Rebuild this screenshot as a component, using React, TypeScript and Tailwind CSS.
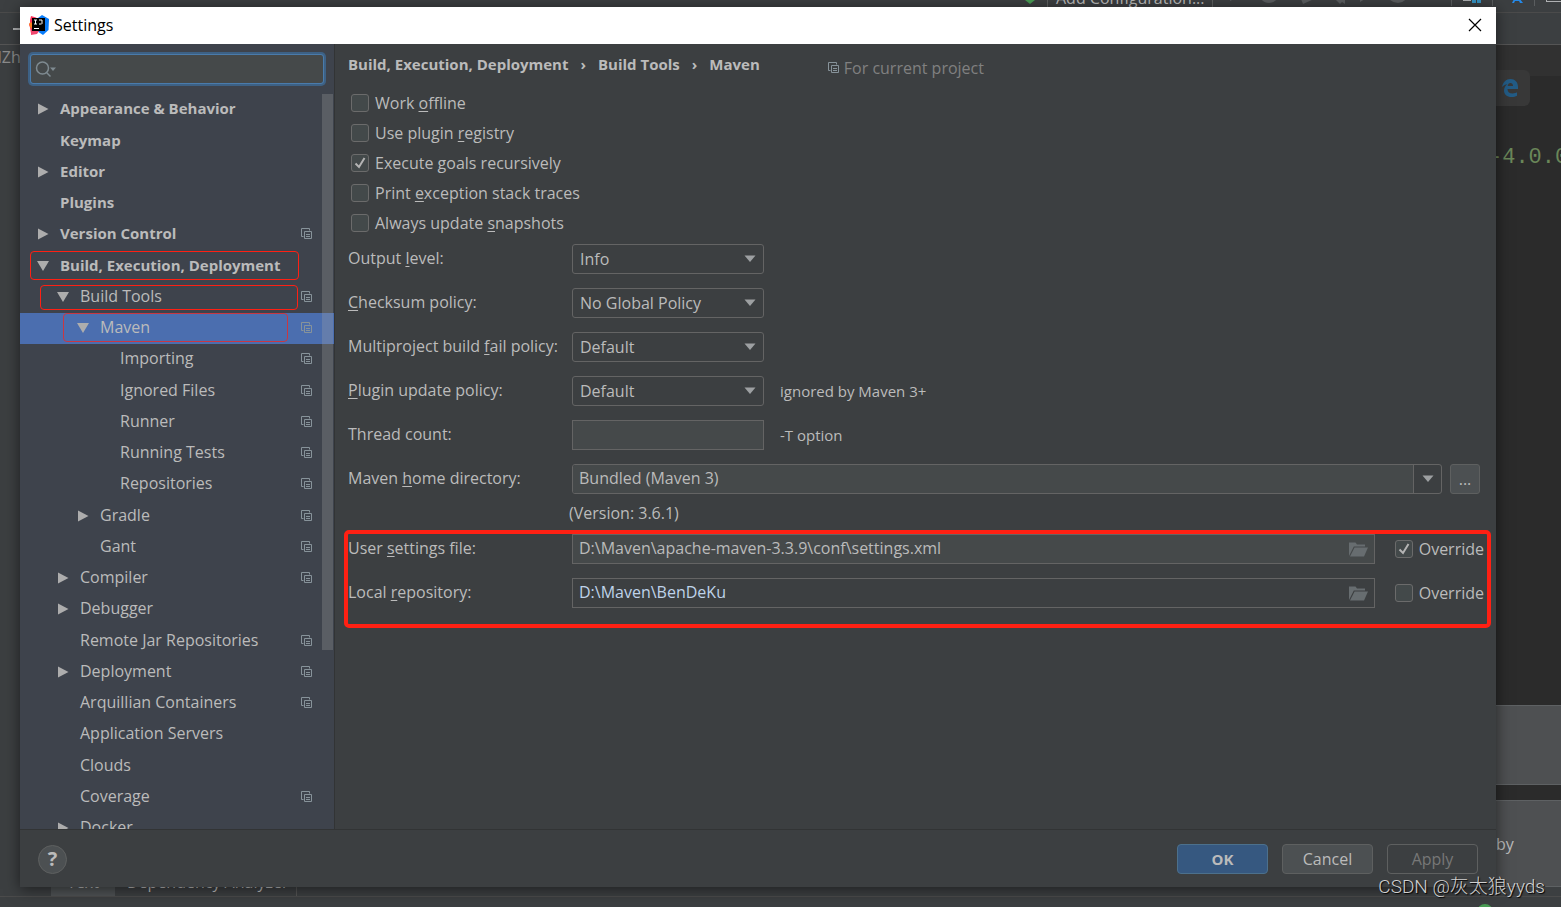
import { useState } from "react";
import type { ReactNode } from "react";

type TreeNode = {
  label: string;
  level: number;
  arrow?: "right" | "down";
  bold?: boolean;
  project?: boolean;
  selected?: boolean;
  mark?: string;
};

const TREE: TreeNode[] = [
  { label: "Appearance & Behavior", level: 0, arrow: "right", bold: true },
  { label: "Keymap", level: 0, bold: true },
  { label: "Editor", level: 0, arrow: "right", bold: true },
  { label: "Plugins", level: 0, bold: true },
  { label: "Version Control", level: 0, arrow: "right", bold: true, project: true },
  { label: "Build, Execution, Deployment", level: 0, arrow: "down", bold: true, mark: "left-[10px] right-[35px] top-0 h-[29px] border-[#ff2013]" },
  { label: "Build Tools", level: 1, arrow: "down", project: true, mark: "left-5 right-9 top-[3px] h-[25px] border-[#ff2013]" },
  { label: "Maven", level: 2, arrow: "down", project: true, selected: true, mark: "left-[43px] right-[46px] top-0 h-[29px] border-[#ff2013]/70" },
  { label: "Importing", level: 3, project: true },
  { label: "Ignored Files", level: 3, project: true },
  { label: "Runner", level: 3, project: true },
  { label: "Running Tests", level: 3, project: true },
  { label: "Repositories", level: 3, project: true },
  { label: "Gradle", level: 2, arrow: "right", project: true },
  { label: "Gant", level: 2, project: true },
  { label: "Compiler", level: 1, arrow: "right", project: true },
  { label: "Debugger", level: 1, arrow: "right" },
  { label: "Remote Jar Repositories", level: 1, project: true },
  { label: "Deployment", level: 1, arrow: "right", project: true },
  { label: "Arquillian Containers", level: 1, project: true },
  { label: "Application Servers", level: 1 },
  { label: "Clouds", level: 1 },
  { label: "Coverage", level: 1, project: true },
  { label: "Docker", level: 1, arrow: "right" },
];

const INDENT = ["pl-4", "pl-9", "pl-14", "pl-[76px]"];

const ProjectIcon = () => (
  <svg width="12" height="12" viewBox="0 0 12 12" fill="none" stroke="#87939a" className="shrink-0">
    <path d="M2.5 8.5h-2v-8h8v2" />
    <path d="M3.5 3.5h7v7h-7z" />
    <path d="M5 6.5h4M5 8.5h4" />
  </svg>
);

const TreeArrow = ({ dir }: { dir?: "right" | "down" }) => (
  <svg width="14" height="12" viewBox="0 0 14 12" fill="#adadad" className="shrink-0">
    {dir === "right" && <path d="M2 0.5v11l10.5-5.5z" />}
    {dir === "down" && <path d="M1 1h12l-6 10z" />}
  </svg>
);

const DropArrow = () => (
  <svg width="12" height="8" viewBox="0 0 12 8" fill="#9da0a2" className="pointer-events-none">
    <path d="M0.5 0.5h11l-5.5 6.5z" />
  </svg>
);

const FolderIcon = () => (
  <svg width="19" height="15" viewBox="0 0 19 15" fill="#676d70">
    <path d="M0 14V0.5h6.500l1.500 2h8V4.500H4.800z" />
    <path d="M5.600 5.500H19L15 14.500H1z" />
  </svg>
);

const Logo = () => (
  <svg width="20" height="20" viewBox="0 0 20 20">
    <path d="M1 5l1-4 5 1.500 4 4-6 9-3 3-1-6-1-3 1-2z" fill="#fc3158" />
    <path d="M0 9l2-2 2 3-2 4z" fill="#fc801d" />
    <path d="M9 3l4-3 7 4-.5 11-5.500 5-6-4z" fill="#087cfa" />
    <path d="M2 15l8 1-2 3-6 1z" fill="#f0466e" />
    <path d="M3 3h13v13H3z" fill="#000" />
    <path d="M5 5h3M6.500 5v4M5 9h3M10 5h3v3.500l-.5.5H10M5 13.500h5" stroke="#fff" fill="none" />
  </svg>
);

// An underscore in the text marks the mnemonic letter that follows it.
const Mnemonic = ({ text }: { text: string }) => {
  const at = text.indexOf("_");
  if (at < 0) return <>{text}</>;
  return (
    <>
      {text.slice(0, at)}
      <u className="underline-offset-2">{text[at + 1]}</u>
      {text.slice(at + 2)}
    </>
  );
};

const Check = ({ text, initial = false }: { text: string; initial?: boolean }) => {
  const [on, setOn] = useState(initial);
  return (
    <label className="flex h-[30px] items-center gap-[6px] whitespace-nowrap">
      <span className="relative h-[18px] w-[18px] shrink-0">
        <input
          type="checkbox"
          checked={on}
          onChange={() => setOn(!on)}
          className="block h-[18px] w-[18px] appearance-none rounded-[3px] border border-[#6b6b6b] bg-[#43494a]"
        />
        {on && (
          <svg width="18" height="18" viewBox="0 0 18 18" className="pointer-events-none absolute inset-0" fill="none" stroke="#b4b4b4" strokeWidth="2">
            <path d="M4.500 9.500l3.500 3.500 5.500-9" />
          </svg>
        )}
      </span>
      <span>
        <Mnemonic text={text} />
      </span>
    </label>
  );
};

const Row = ({ id, label, children }: { id: string; label: string; children: ReactNode }) => (
  <div className="flex h-[30px] items-center">
    <label htmlFor={id} className="w-[224px] shrink-0 whitespace-nowrap pb-[2px]">
      <Mnemonic text={label} />
    </label>
    {children}
  </div>
);

const Select = ({ id, value }: { id: string; value: string }) => (
  <div className="relative h-[30px] w-48">
    <select id={id} className="h-full w-full appearance-none rounded-[3px] border border-[#646464] bg-[#3c3f41] px-[7px] outline-none">
      <option>{value}</option>
    </select>
    <div className="pointer-events-none absolute right-2 top-[11px]">
      <DropArrow />
    </div>
  </div>
);

const PathField = ({ id, value, muted }: { id: string; value: string; muted?: boolean }) => (
  <div
    className={
      "flex h-[30px] min-w-0 flex-1 items-center border border-[#646464] pr-[6px] " +
      (muted ? "bg-[#45494a]" : "bg-[#3c3f41] text-[#bfd3ea]")
    }
  >
    <input id={id} defaultValue={value} className="min-w-0 flex-1 bg-transparent px-[6px] pb-[2px] outline-none" />
    <button aria-label="Browse">
      <FolderIcon />
    </button>
  </div>
);

const Sidebar = () => (
  <aside className="flex w-[315px] shrink-0 flex-col border-r border-[#323435] bg-[#3e434c]">
    <div className="px-[11px] pb-[11px] pt-[11px]">
      <div className="flex h-[28px] items-center gap-px rounded-[2px] bg-[#45494a] pl-1 ring-3 ring-[#3d6185] outline outline-[#4a7bab]">
        <svg width="22" height="17" viewBox="0 0 22 17" fill="none" stroke="#7f8b91" strokeWidth="1.500">
          <circle cx="7.500" cy="7" r="6" />
          <path d="M11.500 11.500l4 4" />
          <path d="M15 6.500h6l-3 3.500z" fill="#7f8b91" stroke="none" />
        </svg>
        <input aria-label="Search settings" className="min-w-0 flex-1 bg-transparent outline-none" />
      </div>
    </div>
    <div className="relative h-0 grow overflow-hidden">
      <ul>
        {TREE.map((node) => (
          <li
            key={node.label}
            className={
              "relative flex h-[31px] items-center pb-[2px] pr-[21px] nth-[4n+1]:h-8 " +
              INDENT[node.level] +
              (node.selected ? " bg-[#4b6eaf]" : "") +
              (node.bold ? " text-[15px] font-bold" : "")
            }
          >
            <TreeArrow dir={node.arrow} />
            <span className="ml-[10px] flex-1 whitespace-nowrap pb-[2px] leading-5">{node.label}</span>
            {node.project && <ProjectIcon />}
            {node.mark && <span className={"pointer-events-none absolute rounded border " + node.mark} />}
          </li>
        ))}
      </ul>
      <div className="absolute right-[1px] top-0 h-[556px] w-[11px] bg-[#a6a6a6]/28" />
    </div>
  </aside>
);

const MavenPage = () => (
  <main className="min-w-0 flex-1 pl-[13px] pr-3">
    <div className="flex h-[44px] items-center">
      <h1 className="flex gap-3 whitespace-nowrap pb-1 text-[15px] leading-5 font-bold">
        <span>Build, Execution, Deployment</span>
        <span>›</span>
        <span>Build Tools</span>
        <span>›</span>
        <span>Maven</span>
      </h1>
      <p className="ml-[68px] flex items-center gap-1 whitespace-nowrap pt-1 text-[#808080]">
        <ProjectIcon />
        For current project
      </p>
    </div>
    <div className="pl-[3px]">
      <Check text="Work _offline" />
      <Check text="Use plugin _registry" />
      <Check text="Execute _goals recursively" initial />
      <Check text="Print _exception stack traces" />
      <Check text="Always update _snapshots" />
    </div>
    <div className="mt-[6px] flex flex-col gap-[14px]">
      <Row id="output" label="Output _level:">
        <Select id="output" value="Info" />
      </Row>
      <Row id="checksum" label="_Checksum policy:">
        <Select id="checksum" value="No Global Policy" />
      </Row>
      <Row id="fail" label="Multiproject build _fail policy:">
        <Select id="fail" value="Default" />
      </Row>
      <Row id="update" label="_Plugin update policy:">
        <Select id="update" value="Default" />
        <span className="ml-4 text-[15px]">ignored by Maven 3+</span>
      </Row>
      <Row id="threads" label="Thread count:">
        <input id="threads" className="h-[30px] w-48 border border-[#646464] bg-[#45494a] px-[6px] outline-none" />
        <span className="ml-4 text-[15px]">-T option</span>
      </Row>
      <Row id="home" label="Maven _home directory:">
        <div className="flex h-[30px] min-w-0 flex-1 overflow-hidden rounded-[3px] border border-[#646464]">
          <input id="home" defaultValue="Bundled (Maven 3)" className="min-w-0 flex-1 bg-[#45494a] px-[6px] pb-[2px] outline-none" />
          <button aria-label="Show Maven homes" className="flex w-7 items-center justify-center border-l border-[#646464]">
            <DropArrow />
          </button>
        </div>
        <button className="ml-2 mr-1 h-[30px] w-[30px] rounded-[3px] border border-[#5e6060] bg-[#4c5052]">...</button>
      </Row>
    </div>
    <p className="ml-[221px] flex h-10 items-center pb-[2px]">(Version: 3.6.1)</p>
    <div className="relative flex flex-col gap-[14px]">
      <Row id="settings" label="User _settings file:">
        <PathField id="settings" value="D:\Maven\apache-maven-3.3.9\conf\settings.xml" muted />
        <div className="ml-5">
          <Check text="Override" initial />
        </div>
      </Row>
      <Row id="repo" label="Local _repository:">
        <PathField id="repo" value="D:\Maven\BenDeKu" />
        <div className="ml-5">
          <Check text="Override" />
        </div>
      </Row>
      <div className="pointer-events-none absolute -bottom-5 -left-1 -right-[7px] -top-1 rounded-[5px] border-4 border-[#ff2013]" />
    </div>
  </main>
);

const Dialog = () => (
  <section aria-label="Settings" className="flex w-full flex-col bg-[#3c3f41] shadow-[0_2px_14px_rgba(0,0,0,0.55)]">
    <header className="flex h-[37px] items-center gap-[5px] bg-white pb-[2px] pl-[9px] pr-[14px] text-black">
      <Logo />
      <span className="flex-1">Settings</span>
      <button aria-label="Close">
        <svg width="14" height="14" viewBox="0 0 14 14" stroke="#000" strokeWidth="1.200">
          <path d="M1 1l12 12M13 1L1 13" />
        </svg>
      </button>
    </header>
    <div className="flex flex-1">
      <Sidebar />
      <MavenPage />
    </div>
    <footer className="flex h-[58px] items-center gap-[14px] border-t border-[#323435] pl-[18px] pr-[18px] pt-[1px]">
      <button aria-label="Help" className="h-[29px] w-[29px] rounded-full border border-[#5e6060] bg-[#4c5052] text-xl leading-none font-bold">
        ?
      </button>
      <span className="flex-1" />
      <button className="h-[30px] w-[91px] rounded border border-[#4c708c] bg-[#365880] text-[15px] font-bold">OK</button>
      <button className="h-[30px] w-[91px] rounded border border-[#5e6060] bg-[#4c5052]">Cancel</button>
      <button disabled className="h-[30px] w-[91px] rounded border border-[#5e6060] text-[#777777]">
        Apply
      </button>
    </footer>
  </section>
);

// The editor window behind the dialog; only its edges show.
const Ide = () => (
  <div className="flex h-screen flex-col bg-[#3c3f41]">
    <div className="flex h-[13px] shrink-0 items-end justify-end border-b border-[#4b4b4b]">
      <svg width="12" height="12" viewBox="0 0 12 12" fill="#499c54">
        <path d="M1 0h10L6 4z" />
      </svg>
      <div className="ml-[11px] mr-[15px] flex h-[13px] w-[166px] items-end border-x border-[#5e6060] pb-1 pl-2">
        <span className="whitespace-nowrap">Add Configuration...</span>
      </div>
      <svg width="333" height="13" viewBox="0 0 333 13" fill="#5a5d5f">
        <path d="M2 0h4L2 2zM33 0h16q-3 4-8 4t-8-4zM73 0h13l-11 5zM102 0h15v5l-3-2-2 2-4-4zM132 0h5l-5 3zM161 0h17q-3 4-8 4t-9-4zM196 0h14v1h-14z" />
        <path d="M223 0h1v7h-1zM264 0h1v7h-1zM306 0h1v7h-1z" />
        <path d="M235 0h8v2h-8z" fill="#afb1b3" />
        <path d="M244 0h4v4h-4zM249 0h4v4h-4z" fill="#3592c4" />
        <path d="M284 4l2-4h6l3 4h-3l-1-2h-4l-1 2z" fill="#2489e8" />
        <path d="M318 0h1v2h14v1h-15z" fill="#afb1b3" />
      </svg>
    </div>
    <div className="flex h-8 shrink-0 items-center border-b border-[#555555]">
      <span className="ml-[13px] h-[2px] w-[7px] bg-[#afb1b3]" />
    </div>
    <div className="flex min-h-0 flex-1">
      <div className="w-5 pt-[2px] text-[#8c8c8c]">
        <span className="-ml-2">dZh</span>
      </div>
      <div className="flex-1" />
      <div className="flex w-[65px] flex-col bg-[#2b2b2b]">
        <div className="h-[31px] bg-[#313131]" />
        <div className="-mt-[6px] flex h-9 w-[34px] items-center rounded-r-md bg-[#383838] pl-[6px]">
          <svg width="16" height="18" viewBox="0 0 16 18" fill="#235c86">
            <path d="M0 8C1 3 4 0 8.500 0 13 0 16 3 16 8v2H5.500c0 3 2 4.500 5 4.500 2 0 3.500-.5 4.500-1.200v3.500C13.500 17.600 12 18 9.500 18 5 18 2 15.500 2 11.500 2 8.500 3.500 6.500 5.500 5.300 3.500 5.500 1.500 6.500 0 8zm5.700-1H11c0-2-1-3-2.600-3S6 5.200 5.700 7z" />
          </svg>
        </div>
        <div className="mt-10 -ml-[7px] whitespace-nowrap font-['Liberation_Mono',monospace] text-[22px] leading-6 text-[#6a8759]">-4.0.0</div>
        <div className="flex-1" />
        <div className="h-20 border-y border-[#5e6163] bg-[#4e5052]" />
        <div className="mt-[15px] h-[87px] border-y border-[#5e6163] bg-[#4e5052] pt-[33px]">by</div>
      </div>
    </div>
    <div className="flex h-[10px] shrink-0 items-end overflow-hidden border-b border-[#4b4b4b] pl-[51px]">
      <span className="flex h-[18px] w-16 items-center justify-center bg-[#4e5254] pb-[10px]">Text</span>
      <span className="flex h-[18px] w-[182px] items-center border-r border-[#555555] pb-[10px] pl-3 whitespace-nowrap">Dependency Analyzer</span>
    </div>
    <div className="flex h-[10px] shrink-0 justify-end overflow-hidden pr-[68px] pt-[7px]">
      <span className="h-4 w-4 rounded-full bg-[#499c54]" />
    </div>
  </div>
);

export default function App() {
  return (
    <div className="relative min-h-screen overflow-hidden font-['Open_Sans','Noto_Sans_CJK_SC',sans-serif] text-base leading-5 text-[#bbbbbb]">
      <Ide />
      <div className="absolute inset-0 flex pb-5 pl-5 pr-[65px] pt-[7px]">
        <Dialog />
      </div>
      <p className="absolute bottom-2 right-4 font-[Roboto,'Noto_Sans_CJK_SC',sans-serif] text-[19px] leading-6 font-light text-[#d0d0d0] [text-shadow:1px_1px_1px_#000]">
        CSDN @灰太狼yyds
      </p>
    </div>
  );
}
